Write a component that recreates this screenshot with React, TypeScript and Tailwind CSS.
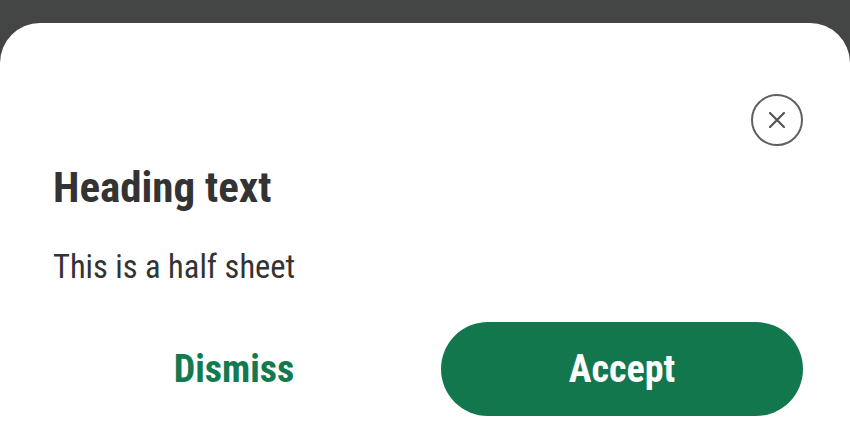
export default function App() {
  return (
    <div className="w-[850px] h-[440px] overflow-hidden bg-[#444645] pt-[23px]" style={{ fontFamily: "'Roboto Condensed', Roboto, 'Noto Sans', sans-serif" }}>
      <div className="h-[600px] bg-white rounded-t-[40px] pl-[53px] pr-[47px] pt-[71px] flex flex-col [font-stretch:75%]">
        <div className="flex justify-end">
          <button className="w-[52px] h-[52px] rounded-full border-2 border-[#5f6160] flex items-center justify-center">
            <svg width="18" height="18" viewBox="0 0 18 18" fill="none" stroke="#555" strokeWidth="2.2" strokeLinecap="round">
              <path d="M2 2L16 16M16 2L2 16" />
            </svg>
          </button>
        </div>
        <h1 className="mt-[16px] text-[43px] leading-[50px] font-bold text-[#333333]">Heading text</h1>
        <p className="mt-[36px] text-[32.5px] leading-[38px] text-[#333333]">This is a half sheet</p>
        <div className="mt-[36px] grid grid-cols-2 gap-[26px]">
          <button className="h-[94px] rounded-full text-[38px] font-bold text-[#127a4e]">Dismiss</button>
          <button className="h-[94px] rounded-full bg-[#12774c] text-[38px] font-bold text-white">Accept</button>
        </div>
      </div>
    </div>
  );
}
